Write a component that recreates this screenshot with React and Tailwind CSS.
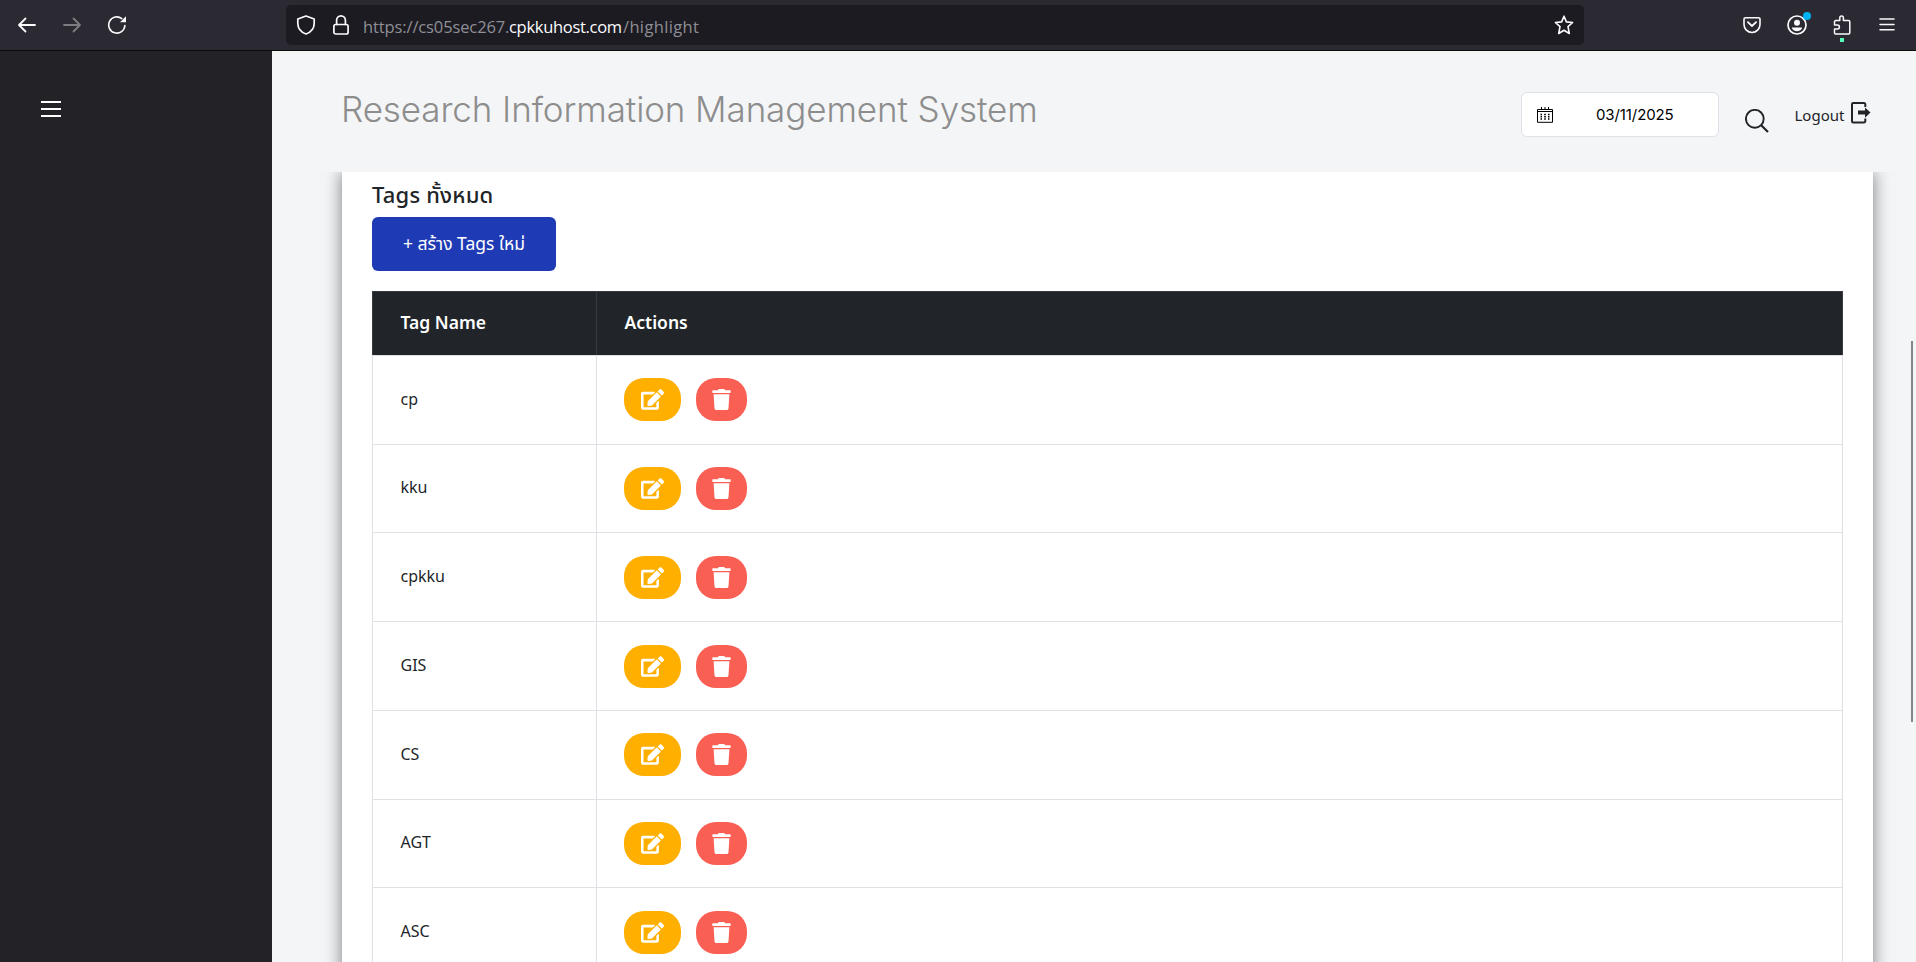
import React from "react";
import { FaEdit, FaTrash } from "react-icons/fa";

const rows = [
  { name: "cp", height: "h-[89px]", pad: "pt-[22px]", textPad: "pb-[2px]" },
  { name: "kku", height: "h-[88px]", pad: "pt-[22px]", textPad: "pb-[3px]" },
  { name: "cpkku", height: "h-[89px]", pad: "pt-[23px]", textPad: "pb-[2px]" },
  { name: "GIS", height: "h-[89px]", pad: "pt-[23px]", textPad: "pb-[2px]" },
  { name: "CS", height: "h-[89px]", pad: "pt-[22px]", textPad: "pb-[2px]" },
  { name: "AGT", height: "h-[88px]", pad: "pt-[22px]", textPad: "pb-[3px]" },
  { name: "ASC", height: "h-[89px]", pad: "pt-[23px]", textPad: "pb-[2px]" },
];

function Icon({ size = 20, children, className = "" }) {
  return (
    <svg
      width={size}
      height={size}
      viewBox={`0 0 ${size} ${size}`}
      fill="none"
      stroke="currentColor"
      strokeWidth="1.5"
      strokeLinecap="round"
      strokeLinejoin="round"
      className={`shrink-0 ${className}`}
    >
      {children}
    </svg>
  );
}

function BrowserBar() {
  return (
    <div className="flex h-[51px] shrink-0 items-center border-b border-[#0c0c0d] bg-[#2b2a33] text-[#fbfbfe]">
      <div className="flex w-[286px] items-center gap-[25px] pl-[17px]">
        <Icon>
          <path d="M18 10H2M8.500 3.500 2 10l6.500 6.500" strokeWidth="1.800" />
        </Icon>
        <Icon className="text-[#7d7c83]">
          <path d="M2 10h16M11.500 3.500 18 10l-6.500 6.500" strokeWidth="1.800" />
        </Icon>
        <Icon>
          <path d="M17.900 10.500A8.100 8.100 0 1 1 14.800 3.600" strokeWidth="1.600" />
          <path d="M19 1.200v6h-6z" fill="currentColor" stroke="none" />
        </Icon>
      </div>
      <div className="flex h-10 w-[1298px] items-center rounded-[5px] bg-[#1c1b22] pl-[10px] pr-[10px]">
        <Icon>
          <path
            d="M10 1 1.800 4v4.200c0 4.800 3.200 8.900 8.200 10.800 5-1.900 8.200-6 8.200-10.800V4z"
            strokeWidth="1.700"
          />
        </Icon>
        <Icon className="ml-[15px]">
          <rect x="2.900" y="9.500" width="14.200" height="9.500" rx="1.800" strokeWidth="1.700" />
          <path d="M5.600 9.500V5.300a4.400 4.400 0 0 1 8.800 0v4.200" strokeWidth="1.700" />
        </Icon>
        <div className="ml-[12px] flex whitespace-pre pt-[3px] font-['Open_Sans',sans-serif] text-[16.500px] leading-6 text-[#8f8f95]">
          <span className="w-[146px] tracking-[-0.120px]">https://cs05sec267.</span>
          <span className="w-[114px] tracking-[-0.300px] text-[#fbfbfe]">cpkkuhost.com</span>
          <span className="tracking-[0.350px]">/highlight</span>
        </div>
        <Icon className="ml-auto">
          <path
            d="M10 1.200l2.400 5.700 6.200.6-4.600 4.200 1.300 6.800L10 15.300l-5.300 3.200L6 11.700 1.400 7.500l6.200-.6z"
            strokeWidth="1.600"
          />
        </Icon>
      </div>
      <div className="flex flex-1 items-center justify-end gap-[25px] pr-[19px]">
        <Icon>
          <path
            d="M3.500 2.700h13a1.500 1.500 0 0 1 1.500 1.500v5.300a8 8 0 0 1-16 0V4.200a1.500 1.500 0 0 1 1.500-1.500z"
            strokeWidth="1.600"
          />
          <path d="M5.900 7.200 10 11l4.100-3.800" strokeWidth="1.800" />
        </Icon>
        <div className="relative">
          <Icon>
            <circle cx="10" cy="10" r="9" strokeWidth="1.700" />
            <circle cx="10" cy="7.800" r="3" fill="currentColor" stroke="none" />
            <path
              d="M5.500 12.500h9c.6 0 .7.600.4 1.100-1 1.700-2.800 2.700-4.900 2.700s-3.900-1-4.900-2.700c-.3-.5-.2-1.100.4-1.100z"
              fill="currentColor"
              stroke="none"
            />
          </Icon>
          <span className="absolute -top-[3px] left-[16px] size-2 rounded-full bg-[#00b3f4]" />
        </div>
        <div className="relative">
          <Icon>
            <path
              d="M2.500 8.700V6.800A1.200 1.200 0 0 1 3.700 5.600h4.100V2.700a1.800 1.800 0 0 1 3.600 0v2.900h5.200a1.200 1.200 0 0 1 1.200 1.200v11a1.200 1.200 0 0 1-1.200 1.200H3.700a1.200 1.200 0 0 1-1.200-1.200v-3.900h3a1.900 1.900 0 0 0 0-3.800h-3z"
              strokeWidth="1.500"
            />
          </Icon>
          <span className="absolute left-[8px] top-[23px] size-1 bg-[#54ffbd]" />
        </div>
        <Icon>
          <path d="M3 4h14M3 9.500h14M3 14.800h14" strokeWidth="1.500" />
        </Icon>
      </div>
    </div>
  );
}

function Header() {
  return (
    <header className="flex h-[121px] shrink-0 items-start pl-[69px]">
      <h1 className="whitespace-nowrap pt-[33px] font-['Inter',sans-serif] text-[35px] font-light leading-[50px] tracking-[-0.100px] text-[#8d8d8d]">
        Research Information Management System
      </h1>
      <div className="ml-auto mt-[41px] flex h-[45px] w-[198px] items-center rounded-[6px] border border-[#dee2e6] bg-white">
        <svg width="16" height="16" viewBox="0 0 16 16" className="ml-[15px] text-black" fill="none" stroke="currentColor">
          <path d="M.5 2.500h15v12.800H.5zM.5 4.500h15M4.500 0v3M8 0v3M11.500 0v3" />
          <path
            d="M3.500 7.500h1.500M7.200 7.500h1.600M11 7.500h1.500M3.500 9.800h1.500M7.200 9.800h1.600M11 9.800h1.500M3.500 12h1.500M7.200 12h1.600M11 12h1.500"
            strokeWidth="1.500"
          />
        </svg>
        <span className="ml-[43px] whitespace-nowrap pt-[2px] font-['Inter',sans-serif] text-[15px] font-normal tracking-[-0.100px] text-black">
          03/11/2025
        </span>
      </div>
      <svg width="24" height="24" viewBox="0 0 24 24" className="ml-[26px] mt-[58px] text-[#212529]" fill="none" stroke="currentColor">
        <circle cx="9.800" cy="9.800" r="8.900" strokeWidth="1.900" />
        <path d="m16 16 7 7" strokeWidth="2.200" />
      </svg>
      <div className="ml-[25.500px] mr-[45px] mt-[51px] flex">
        <span className="w-[56.500px] whitespace-nowrap pt-px font-['Noto_Sans',sans-serif] text-[15px] leading-6 text-[#212529]">
          Logout
        </span>
        <svg width="20" height="22" viewBox="0 0 20 22" className="text-[#212529]" fill="none" stroke="currentColor">
          <path d="M14.300 5V2.200A1.200 1.200 0 0 0 13.100 1H2.200A1.200 1.200 0 0 0 1 2.200v17.100a1.200 1.200 0 0 0 1.200 1.200h10.900a1.200 1.200 0 0 0 1.200-1.200V16.500" strokeWidth="2" />
          <path d="M7 8.600h7V5.500l5.500 5.100-5.500 5.100v-3.100H7z" fill="currentColor" stroke="none" />
        </svg>
      </div>
    </header>
  );
}

function TagRow({ name, height, pad, textPad }) {
  return (
    <div className={`flex shrink-0 border-b border-[#dee2e6] ${height}`}>
      <div className={`flex w-[224px] items-center border-r border-[#dee2e6] pl-[27.500px] text-[16px] text-[#212529] ${textPad}`}>
        {name}
      </div>
      <div className={`flex flex-1 items-start gap-[15px] pl-[27px] text-white ${pad}`}>
        <button className="flex h-[43px] w-[57px] items-center justify-center rounded-[20px] bg-[#ffaf00]">
          <FaEdit className="h-[21px] w-[23px]" />
        </button>
        <button className="flex h-[43px] w-[51px] items-center justify-center rounded-[20px] bg-[#fa5f54]">
          <FaTrash className="h-[21px] w-[19px]" />
        </button>
      </div>
    </div>
  );
}

function TagsCard() {
  return (
    <section className="ml-[70px] mr-[43px] flex flex-1 flex-col bg-white px-[30px] font-['Noto_Sans','Noto_Sans_Thai',sans-serif] shadow-[0_0_16px_rgba(0,0,0,0.5)]">
      <h2 className="mt-[7px] h-[31px] shrink-0 whitespace-nowrap text-[22px] font-medium leading-[30px] tracking-[0.200px] text-[#212529]">
        Tags ทั้งหมด
      </h2>
      <button className="mt-[7px] h-[54px] w-[184px] shrink-0 whitespace-nowrap rounded-[6px] bg-[#1e3ab4] pb-[2px] text-[17.500px] text-white">
        + สร้าง Tags ใหม่
      </button>
      <div className="mt-5 flex shrink-0 flex-col">
        <div className="flex h-[64px] items-center border border-b-0 border-[#373b3e] bg-[#212529] text-[17.500px] font-semibold text-white">
          <div className="flex h-full w-[224px] items-center border-r border-[#373b3e] pb-[2px] pl-[27.500px]">Tag Name</div>
          <div className="pb-[2px] pl-[27.500px]">Actions</div>
        </div>
        <div className="flex flex-col border border-[#dee2e6]">
          {rows.map((row) => (
            <TagRow key={row.name} {...row} />
          ))}
        </div>
      </div>
    </section>
  );
}

export default function App() {
  return (
    <div className="flex h-[962px] w-[1916px] flex-col overflow-hidden bg-[#f4f5f7]">
      <BrowserBar />
      <div className="flex min-h-0 flex-1">
        <aside className="w-[272px] shrink-0 bg-[#232227] pl-[41px] pt-[50px] text-white">
          <div className="flex w-5 flex-col gap-[5px]">
            <span className="h-[2px] bg-white" />
            <span className="h-[2px] bg-white" />
            <span className="h-[2px] bg-white" />
          </div>
        </aside>
        <main className="relative flex min-w-0 flex-1 flex-col">
          <Header />
          <div className="flex min-h-0 flex-1 flex-col overflow-hidden">
            <TagsCard />
          </div>
          <div className="absolute right-[3px] top-[290px] h-[381px] w-[2px] bg-[#85868a]" />
        </main>
      </div>
    </div>
  );
}
